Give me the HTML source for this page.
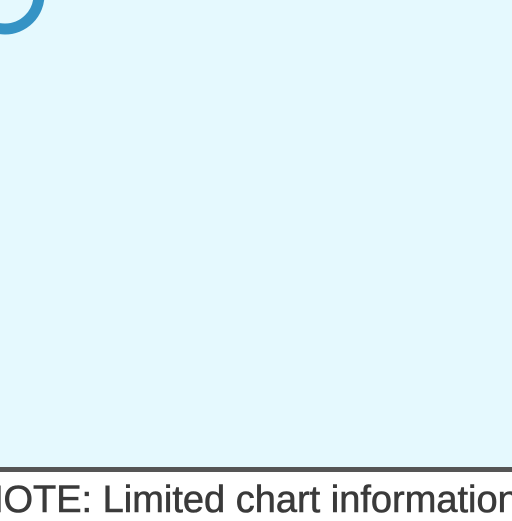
<!DOCTYPE html>
<html><head><style>
html,body{margin:0;padding:0;width:512px;height:512px;overflow:hidden;background:#fff;}
.bg{position:absolute;left:0;top:0;width:512px;height:467px;background:#e5f9fe;}
.line{position:absolute;left:0;top:467px;width:512px;height:5px;background:#555;}
.t{position:absolute;left:-24px;top:479px;font-family:"Liberation Sans",sans-serif;font-size:38px;color:#3a3a3a;white-space:nowrap;line-height:42px;-webkit-text-stroke:0.6px #3a3a3a;}
svg{position:absolute;left:0;top:0;}
</style></head><body>
<div class="bg"></div>
<svg width="80" height="50"><circle cx="5" cy="-5" r="34" fill="none" stroke="#3593c5" stroke-width="11"/></svg>
<div class="line"></div>
<div class="t">NOTE: Limited chart information</div>
</body></html>
